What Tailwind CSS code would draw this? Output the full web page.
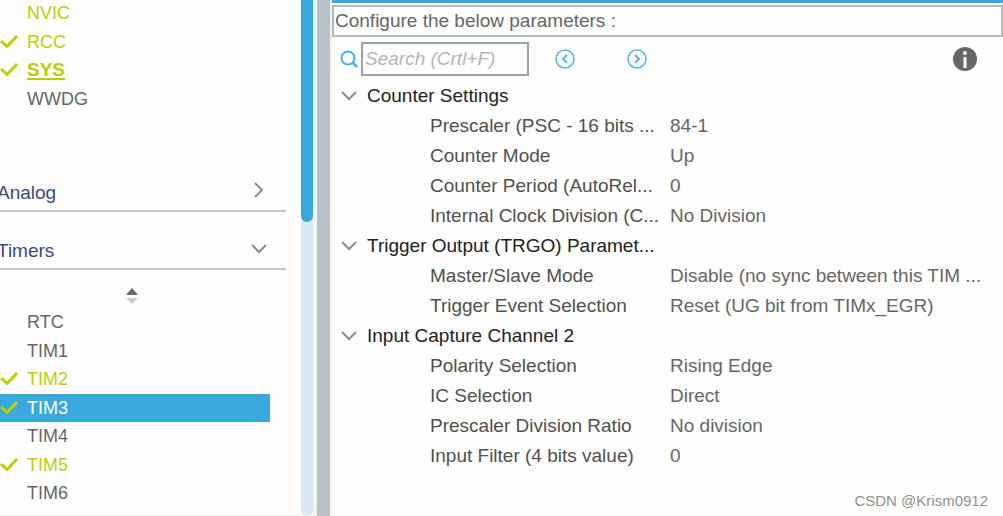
<!DOCTYPE html>
<html lang="en">

<head>
    <meta charset="UTF-8">
    <meta name="viewport" content="width=device-width, initial-scale=1.0">
    <title>TIM3 Mode and Configuration</title>
    <script src="https://cdn.jsdelivr.net/npm/@tailwindcss/browser@4"></script>
</head>

<body class="relative flex h-screen overflow-hidden bg-[#fefefe] font-['Liberation_Sans',Arial,sans-serif] text-[#666]">

    <!-- Shared icons -->
    <svg class="hidden">
        <symbol id="check" viewBox="0 0 18 16">
            <path d="M1 7 L7 12.5 L17 2" fill="none" stroke="#bccf00" stroke-width="3" />
        </symbol>
        <symbol id="chevron" viewBox="0 0 18 12">
            <path d="M2 2 L9 9 L16 2" fill="none" stroke="#8c8c8c" stroke-width="2" />
        </symbol>
    </svg>

    <!-- Peripheral categories -->
    <aside class="w-[301px] shrink-0 overflow-hidden border-b border-[#eee]">
        <ul class="-mt-px grid h-[114px] auto-rows-fr text-lg/7 text-[#bccf00]">
            <li class="flex items-center pl-[27px]"><a href="#">NVIC</a></li>
            <li class="flex items-center gap-[9px]"><svg class="h-4 w-[18px]"><use href="#check" /></svg><a href="#">RCC</a></li>
            <li class="flex items-center gap-[9px]"><svg class="h-4 w-[18px]"><use href="#check" /></svg><a href="#" class="text-[19px] font-bold underline decoration-2 underline-offset-2">SYS</a></li>
            <li class="flex items-center pl-[27px] text-[#666]"><a href="#">WWDG</a></li>
        </ul>

        <button class="-ml-[3px] mt-[68px] flex w-[289px] items-center justify-between border-b-2 border-[#bfcbd1] pr-[18px] pb-[5px] text-[19px]/6 text-[#3c4a7c]">
            Analog
            <svg class="mb-1.5 h-3 w-[18px] -rotate-90"><use href="#chevron" /></svg>
        </button>
        <button class="-ml-[3px] mt-[27px] flex w-[289px] items-center justify-between border-b-2 border-[#bfcbd1] pr-[18px] pb-[5px] text-[19px]/6 text-[#3c4a7c]">
            Timers
            <svg class="mb-1 h-3 w-[18px]"><use href="#chevron" /></svg>
        </button>

        <div class="flex h-[38px] w-[264px] items-end justify-center pb-[3px]">
            <button aria-label="Sort">
                <svg class="block h-[17px] w-3" viewBox="0 0 12 17">
                    <path d="M6 0 L12 7 H0 Z" fill="#666" />
                    <path d="M0 10 H12 L6 16 Z" fill="#ccc" />
                </svg>
            </button>
        </div>

        <ul class="grid h-[228px] w-[270px] auto-rows-fr text-lg/7">
            <li class="flex items-center pl-[27px]"><a href="#">RTC</a></li>
            <li class="flex items-center pl-[27px]"><a href="#">TIM1</a></li>
            <li class="flex items-center gap-[9px] text-[#bccf00]"><svg class="h-4 w-[18px]"><use href="#check" /></svg><a href="#">TIM2</a></li>
            <li class="flex items-center gap-[9px] bg-[#39a9dc] text-white"><svg class="h-4 w-[18px]"><use href="#check" /></svg><a href="#">TIM3</a></li>
            <li class="flex items-center pl-[27px]"><a href="#">TIM4</a></li>
            <li class="flex items-center gap-[9px] text-[#bccf00]"><svg class="h-4 w-[18px]"><use href="#check" /></svg><a href="#">TIM5</a></li>
            <li class="flex items-center pl-[27px]"><a href="#">TIM6</a></li>
            <li class="flex items-center pl-[27px]"><a href="#">TIM7</a></li>
        </ul>
    </aside>

    <!-- Scrollbar -->
    <div class="w-3 shrink-0 rounded-b-md bg-[#d9e8f5]">
        <div class="h-[43%] rounded-b-md bg-[#39a9dc]"></div>
    </div>

    <!-- Splitter -->
    <div class="w-[18px] shrink-0 border-r border-l-4 border-[#f0f2f4] bg-[#b7c2c8]"></div>

    <!-- Parameter settings -->
    <main class="min-w-0 flex-1 border-l border-[#f0f2f4]">
        <div class="h-[3px] bg-[#39a9dc]"></div>
        <h1 class="mt-0.5 border-2 border-[#b3babe] pl-px text-[19px]/7">Configure the below parameters :</h1>

        <div class="flex h-11 items-center pr-[26px] pl-2">
            <label for="search" aria-label="Search">
                <svg class="h-[18px] w-[18px]" viewBox="0 0 18 18" fill="none" stroke="#45b3e3">
                    <circle cx="8" cy="8" r="6.5" stroke-width="2" />
                    <path d="M12.5 12.5 L17 17" stroke-width="2.5" />
                </svg>
            </label>
            <input id="search" type="text" placeholder="Search (Crtl+F)"
                class="ml-[3px] h-[34px] w-[168px] border-2 border-[#99a5ac] px-0.5 text-[19px] italic placeholder:text-[#b5b5b5] focus:outline-none">
            <button class="ml-[26px]" aria-label="Previous">
                <svg class="block h-5 w-5" viewBox="0 0 20 20" fill="none" stroke="#55b9e5">
                    <circle cx="10" cy="10" r="9" stroke-width="1.5" />
                    <path d="M12 6 L8 10 L12 14" stroke-width="2" />
                </svg>
            </button>
            <button class="ml-[52px]" aria-label="Next">
                <svg class="block h-5 w-5" viewBox="0 0 20 20" fill="none" stroke="#55b9e5">
                    <circle cx="10" cy="10" r="9" stroke-width="1.5" />
                    <path d="M8 6 L12 10 L8 14" stroke-width="2" />
                </svg>
            </button>
            <button class="ml-auto" aria-label="Information">
                <svg class="block h-6 w-6" viewBox="0 0 24 24">
                    <circle cx="12" cy="12" r="12" fill="#666" />
                    <circle cx="12" cy="6" r="2" fill="#fff" />
                    <path d="M12 10 V21" stroke="#fff" stroke-width="3" />
                </svg>
            </button>
        </div>

        <table class="w-full table-fixed text-left text-[19px]/[30px] whitespace-nowrap">
            <colgroup>
                <col class="w-[338px]">
                <col>
            </colgroup>
            <tbody class="[&_th]:font-normal [&_th]:text-[#505050]">
                <tr><th colspan="2"><button class="flex items-center gap-[9px] pl-2 text-[#222]"><svg class="h-3 w-[18px]"><use href="#chevron" /></svg>Counter Settings</button></th></tr>
                <tr><th class="pl-[98px]">Prescaler (PSC - 16 bits ...</th><td>84-1</td></tr>
                <tr><th class="pl-[98px]">Counter Mode</th><td>Up</td></tr>
                <tr><th class="pl-[98px]">Counter Period (AutoRel...</th><td>0</td></tr>
                <tr><th class="pl-[98px]">Internal Clock Division (C...</th><td>No Division</td></tr>
            </tbody>
            <tbody class="[&_th]:font-normal [&_th]:text-[#505050]">
                <tr><th colspan="2"><button class="flex items-center gap-[9px] pl-2 text-[#222]"><svg class="h-3 w-[18px]"><use href="#chevron" /></svg>Trigger Output (TRGO) Paramet...</button></th></tr>
                <tr><th class="pl-[98px]">Master/Slave Mode</th><td>Disable (no sync between this TIM ...</td></tr>
                <tr><th class="pl-[98px]">Trigger Event Selection</th><td>Reset (UG bit from TIMx_EGR)</td></tr>
            </tbody>
            <tbody class="[&_th]:font-normal [&_th]:text-[#505050]">
                <tr><th colspan="2"><button class="flex items-center gap-[9px] pl-2 text-[#222]"><svg class="h-3 w-[18px]"><use href="#chevron" /></svg>Input Capture Channel 2</button></th></tr>
                <tr><th class="pl-[98px]">Polarity Selection</th><td>Rising Edge</td></tr>
                <tr><th class="pl-[98px]">IC Selection</th><td>Direct</td></tr>
                <tr><th class="pl-[98px]">Prescaler Division Ratio</th><td>No division</td></tr>
                <tr><th class="pl-[98px]">Input Filter (4 bits value)</th><td>0</td></tr>
            </tbody>
        </table>
    </main>

    <p class="absolute right-[15px] bottom-[5px] text-[15px]/5 text-[#909090]">CSDN @Krism0912</p>
</body>

</html>
